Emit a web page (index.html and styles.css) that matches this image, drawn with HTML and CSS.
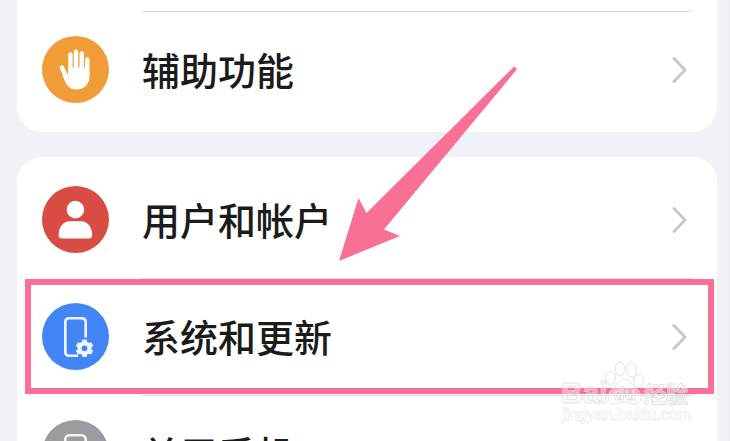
FILE: index.html
```html
<!DOCTYPE html>
<html lang="zh-CN">
<head>
<meta charset="utf-8">
<meta name="viewport" content="width=device-width, initial-scale=1">
<title>设置</title>
<link rel="stylesheet" href="styles.css">
</head>
<body>
<main class="settings">
  <nav class="card card-continued">
    <a class="row divided" href="#accessibility">
      <svg class="icon" viewBox="0 0 67 67" aria-hidden="true">
        <circle cx="33.500" cy="33.500" r="33.500" fill="#f09d38"/>
        <g stroke="#fff" stroke-width="4.400" stroke-linecap="round" fill="none">
          <path d="M28.400 18.500V36M34 15.800V36M39.700 17.500V36M45.200 23.500V38M19.800 31.500L25 42"/>
        </g>
        <path d="M26.200 31.500H42.900L43 33H47.400V41C47.400 48.500 41.500 53.500 35 53.500C29.500 53.500 26 51 23.500 46.500L20 38.500L26.200 40Z" fill="#fff"/>
      </svg>
      <span class="label">辅助功能</span>
      <svg class="chevron" viewBox="0 0 16 28" aria-hidden="true"><path d="M3 2.500L14 14L3 25.500"/></svg>
    </a>
  </nav>
  <nav class="card">
    <a class="row" href="#accounts">
      <svg class="icon" viewBox="0 0 67 67" aria-hidden="true">
        <circle cx="33.500" cy="33.500" r="33.500" fill="#d94c43"/>
        <circle cx="33.400" cy="23.600" r="8.800" fill="#fff"/>
        <path d="M28 35.200H39C46 35.200 50.200 41.500 50.200 49Q50.200 52.500 46.500 52.500H20.300Q16.600 52.500 16.600 49C16.600 41.500 21 35.200 28 35.200Z" fill="#fff"/>
      </svg>
      <span class="label">用户和帐户</span>
      <svg class="chevron" viewBox="0 0 16 28" aria-hidden="true"><path d="M3 2.500L14 14L3 25.500"/></svg>
    </a>
    <a class="row divided highlighted" href="#system">
      <svg class="icon" viewBox="0 0 67 67" aria-hidden="true">
        <circle cx="33.500" cy="33.500" r="33.500" fill="#4285f4"/>
        <path d="M43.700 34.500V19.300Q43.700 15.300 39.700 15.300H27.300Q23.300 15.300 23.300 19.300V48.700Q23.300 52.700 27.300 52.700H36" fill="none" stroke="#f1f5fe" stroke-width="2.600"/>
        <circle cx="42.500" cy="45.300" r="5" fill="none" stroke="#f1f5fe" stroke-width="4.200"/>
        <path d="M42.500 36.500V40M42.500 50.600V54.100M34.900 40.900L38 42.700M47 47.900L50.100 49.700M34.900 49.700L38 47.900M47 42.700L50.100 40.900" fill="none" stroke="#f1f5fe" stroke-width="4.600"/>
      </svg>
      <span class="label">系统和更新</span>
      <svg class="chevron" viewBox="0 0 16 28" aria-hidden="true"><path d="M3 2.500L14 14L3 25.500"/></svg>
    </a>
    <a class="row divided" href="#about">
      <svg class="icon" viewBox="0 0 67 67" aria-hidden="true">
        <circle cx="33.500" cy="33.500" r="33.500" fill="#9b9ca0"/>
        <rect x="23.300" y="15.300" width="20.400" height="37.400" rx="4" fill="none" stroke="#f4f4f5" stroke-width="2.600"/>
      </svg>
      <span class="label">关于手机</span>
      <svg class="chevron" viewBox="0 0 16 28" aria-hidden="true"><path d="M3 2.500L14 14L3 25.500"/></svg>
    </a>
  </nav>
  <svg class="arrow" viewBox="0 0 180 196" aria-hidden="true">
    <path d="M0 195L19.500 132L27.500 147L173.500 2Q176 0 177 1.500Q178 3 176.500 5L45 163.500L61 170Z"/>
  </svg>
  <svg class="watermark" viewBox="0 0 140 70" aria-hidden="true">
    <g class="outline">
      <ellipse cx="51.500" cy="28" rx="5" ry="6.500"/>
      <ellipse cx="61" cy="19" rx="4.700" ry="7"/>
      <ellipse cx="72.500" cy="20" rx="5" ry="7"/>
      <ellipse cx="79.500" cy="31" rx="5" ry="6.500"/>
      <path d="M65 29C60 29 58 35 53 39C47 44 48 54 56 54C60 54 62 52 65 52C68 52 71 54 75 54C84 54 84 44 78 39C73 35 70 29 65 29Z"/>
      <text class="brand" x="2" y="53">Bai</text>
      <text class="brand-small" x="54" y="50">du</text>
      <text class="brand-cjk" x="85" y="52">经验</text>
      <text class="address" x="3" y="70">jingyan.baidu.com</text>
    </g>
  </svg>
</main>
</body>
</html>
```
FILE: styles.css
```css
* {
  box-sizing: border-box;
}

body {
  margin: 0;
  background: #f1f2f7;
  font-family: "Noto Sans CJK SC", sans-serif;
  overflow: hidden;
}

.settings {
  position: relative;
  display: flex;
  flex-direction: column;
  gap: 25px;
  height: 100vh;
  padding: 0 12px 0 17px;
  border-right: 1px solid #e6e7eb;
  overflow: hidden;
}

.card {
  flex: none;
  padding: 4px 0;
  border-radius: 25px;
  background: #fff;
}

.card-continued {
  padding-top: 11px;
  border-radius: 0 0 25px 25px;
}

.row {
  position: relative;
  display: flex;
  align-items: center;
  height: 117px;
  padding: 0 30px 0 25px;
  color: #1b1b1b;
  text-decoration: none;
}

.divided::before {
  content: "";
  position: absolute;
  top: 0;
  left: 125px;
  right: 25px;
  height: 1px;
  background: #dedede;
}

.highlighted::after {
  content: "";
  position: absolute;
  inset: 1px 3px 1px 8px;
  border: 6px solid #f87096;
}

.icon {
  flex: none;
  width: 67px;
  height: 67px;
}

.label {
  flex: 1;
  margin-left: 33px;
  padding-bottom: 2px;
  font-size: 38px;
  font-weight: 500;
  line-height: 56px;
}

.chevron {
  flex: none;
  width: 16px;
  height: 28px;
  fill: none;
  stroke: #c9c9c9;
  stroke-width: 3;
  stroke-linecap: round;
  stroke-linejoin: round;
}

.arrow {
  position: absolute;
  top: 66px;
  left: 339px;
  width: 180px;
  height: 196px;
  fill: #f87096;
}

.watermark {
  position: absolute;
  top: 350px;
  right: 30px;
  width: 140px;
  height: 70px;
  overflow: visible;
}

.outline {
  fill: #fff;
  fill-opacity: 0.4;
  stroke: #d9d9d9;
  stroke-opacity: 0.8;
  stroke-width: 1;
}

.brand,
.brand-small,
.address {
  font-family: "Liberation Sans", sans-serif;
}

.brand {
  font-size: 30px;
  font-weight: 700;
}

.brand-small {
  font-size: 19px;
  font-weight: 700;
}

.brand-cjk {
  font-size: 22px;
  font-weight: 700;
}

.address {
  font-size: 16px;
  fill-opacity: 0.9;
  stroke: #dedede;
  paint-order: stroke;
}
```
